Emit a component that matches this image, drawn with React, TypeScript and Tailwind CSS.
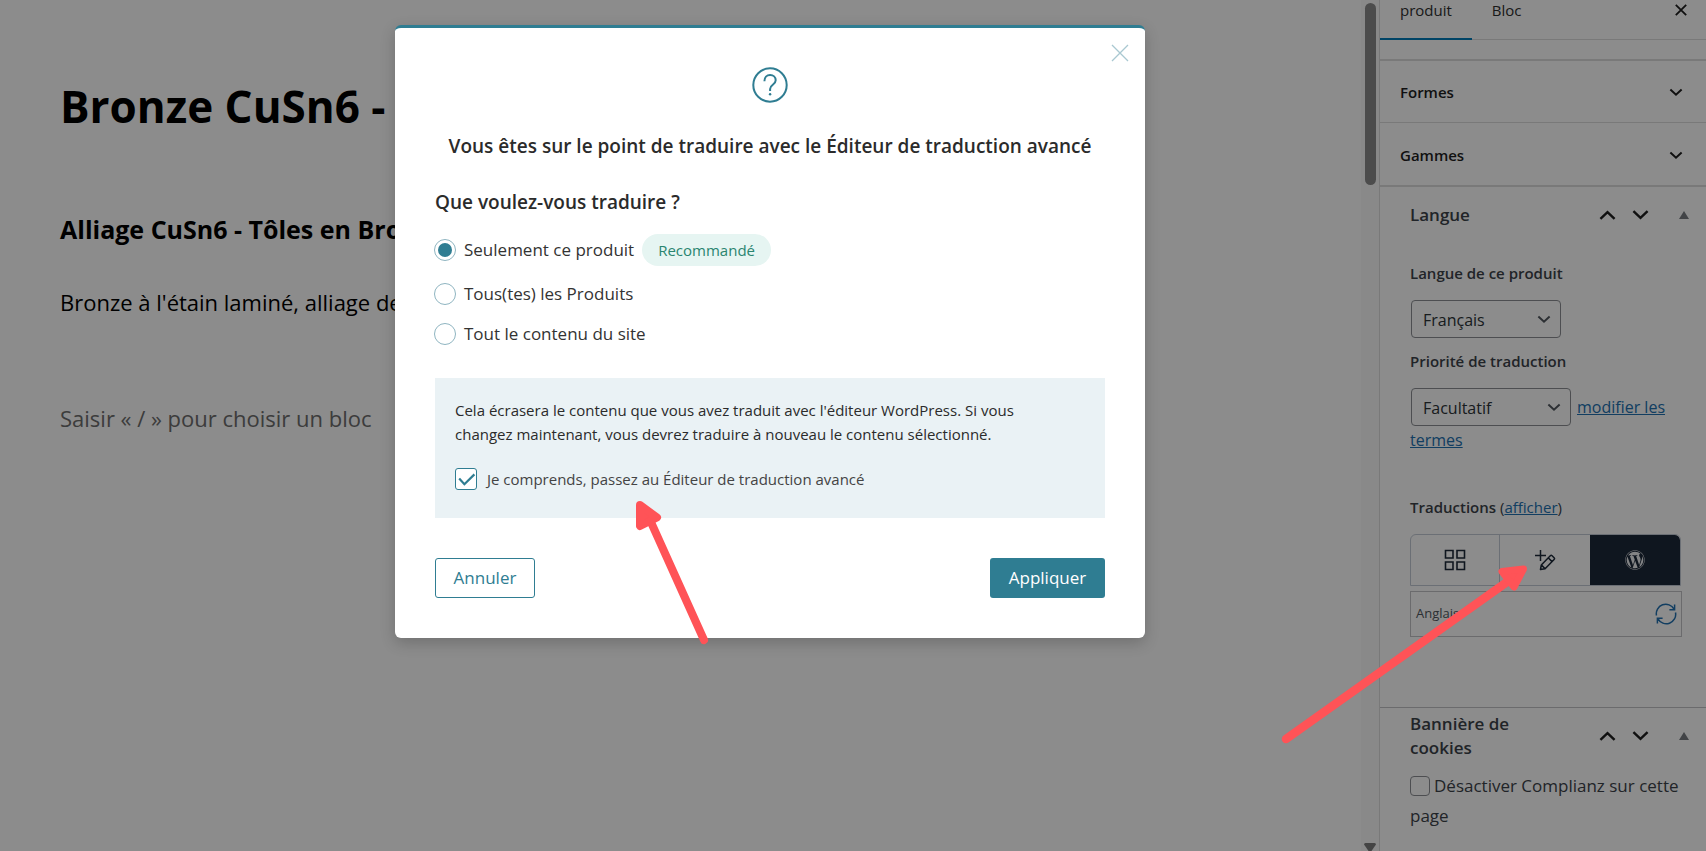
import type { ReactNode } from 'react';
import { FaWordpress } from 'react-icons/fa';

function Chevron({ up = false, className = '' }: { up?: boolean; className?: string }) {
  return (
    <svg viewBox="0 0 18 12" className={className} fill="none" stroke="currentColor" aria-hidden="true">
      <path d={up ? 'M1.5 10 9 3l7.5 7' : 'M1.5 2 9 9l7.5-7'} strokeWidth="2.6" />
    </svg>
  );
}

function PanelRow({ title, last = false }: { title: string; last?: boolean }) {
  return (
    <button
      type="button"
      className={
        last
          ? 'flex h-16 w-full items-center justify-between border-b-2 border-[#dcdcdc] pt-[2px] pr-[23px] pl-5'
          : 'flex h-[62px] w-full items-center justify-between border-b border-[#dcdcdc] pt-[2px] pr-[23px] pl-5'
      }
    >
      <span className="text-[15px] font-semibold text-[#1e1e1e]">{title}</span>
      <Chevron className="h-[9px] w-[14px] text-[#1e1e1e]" />
    </button>
  );
}

function MetaHeader({ title }: { title: string }) {
  return (
    <div className="flex h-[56px] items-center pr-[17px] pl-[30px]">
      <h2 className="w-[130px] text-[17px] leading-6 font-semibold text-[#3c434a]">{title}</h2>
      <div className="ml-auto flex items-center">
        <button type="button" aria-label="Monter" className="mr-4">
          <Chevron up className="h-[12px] w-[17px] text-[#1e1e1e]" />
        </button>
        <button type="button" aria-label="Descendre" className="mr-[30px]">
          <Chevron className="h-[12px] w-[17px] text-[#1e1e1e]" />
        </button>
        <button type="button" aria-label="Replier">
          <svg viewBox="0 0 10 8" className="h-2 w-[10px]" aria-hidden="true">
            <path d="M5 0l5 8H0z" fill="#787c82" />
          </svg>
        </button>
      </div>
    </div>
  );
}

function SelectBox({ id, value, wide = false }: { id: string; value: string; wide?: boolean }) {
  return (
    <div className={wide ? 'relative w-[160px]' : 'relative w-[150px]'}>
      <select
        id={id}
        className="h-[38px] w-full appearance-none rounded-[4px] border border-[#8c8f94] bg-white pt-[2px] pl-[11px] text-[16px] text-[#2c3338]"
      >
        <option>{value}</option>
      </select>
      <Chevron className="pointer-events-none absolute top-[15px] right-[10px] h-[9px] w-[14px] text-[#50575e]" />
    </div>
  );
}

function Sidebar() {
  return (
    <aside className="w-[327px] shrink-0 overflow-hidden border-l border-[#dcdcdc] bg-white">
      <div className="flex h-10 items-stretch border-b border-[#dcdcdc] text-[15px] leading-5 text-[#2f2f2f]">
        <button type="button" className="-mb-px flex items-start border-b-2 border-[#007cba] px-5">
          produit
        </button>
        <button type="button" className="flex items-start px-5">
          Bloc
        </button>
        <button type="button" aria-label="Fermer les réglages" className="mr-[19px] ml-auto flex items-start pt-1">
          <svg viewBox="0 0 12 12" className="h-3 w-3" aria-hidden="true">
            <path d="M.8.8l10.4 10.4M11.2.8.8 11.2" stroke="#1e1e1e" strokeWidth="1.8" />
          </svg>
        </button>
      </div>
      <div className="h-[21px] border-b-2 border-[#dcdcdc]" />
      <PanelRow title="Formes" />
      <PanelRow title="Gammes" last />

      <section className="h-[520px]">
        <MetaHeader title="Langue" />
        <div className="flex flex-col items-start pr-6 pl-[30px] text-[#3c434a]">
          <label htmlFor="lang" className="mt-[18px] text-[15px] leading-6 font-semibold">
            Langue de ce produit
          </label>
          <div className="mt-[15px] pl-px">
            <SelectBox id="lang" value="Français" />
          </div>
          <label htmlFor="prio" className="mt-[11px] text-[15px] leading-6 font-semibold">
            Priorité de traduction
          </label>
          <div className="mt-[15px] flex items-center pl-px">
            <SelectBox id="prio" value="Facultatif" wide />
            <a href="#termes" className="ml-[6px] text-[16px] leading-6 text-[#2271b1] underline">
              modifier les
            </a>
          </div>
          <a href="#termes" className="mt-[2px] text-[16px] leading-6 text-[#2271b1] underline">
            termes
          </a>
          <p className="mt-[43px] text-[15px] leading-6">
            <span className="font-semibold">Traductions</span> (
            <a href="#afficher" className="text-[#2271b1] underline">
              afficher
            </a>
            )
          </p>
          <div className="mt-[15px] flex h-[52px] w-[271px] overflow-hidden rounded-t-[6px] border border-[#c3cbd6]">
            <button type="button" aria-label="Tableau de bord" className="flex w-[89px] items-center justify-center border-r border-[#c3cbd6]">
              <svg viewBox="0 0 22 22" className="h-[22px] w-[22px]" fill="none" stroke="#1d2939" strokeWidth="1.6" aria-hidden="true">
                <path d="M1.500 1.500h7.500v7.500h-7.500zM13 1.500h7.500v7.500H13zM1.500 13h7.500v7.500h-7.500zM13 13h7.500v7.500H13z" />
              </svg>
            </button>
            <button type="button" aria-label="Éditeur de traduction avancé" className="flex w-[90px] items-center justify-center">
              <svg viewBox="0 0 22 22" className="h-[22px] w-[22px]" fill="none" stroke="#1d2939" strokeWidth="1.5" strokeLinejoin="round" aria-hidden="true">
                <path d="M6.500 1v11M1 6.500h11" />
                <path d="M6.500 20.500l.8-4.600 9-9.200a1.300 1.300 0 0 1 1.800 0l2 2a1.300 1.300 0 0 1 0 1.800l-9 9.200zM14.200 8.800l3.800 3.800M7.300 15.900l3.800 3.800" />
              </svg>
            </button>
            <button type="button" aria-label="Éditeur WordPress" className="flex w-[90px] items-center justify-center rounded-tr-[5px] bg-[#1d2939] text-[#eef0f3]">
              <FaWordpress className="h-5 w-5" />
            </button>
          </div>
          <div className="mt-[5px] flex h-[46px] w-[272px] items-center justify-between border border-[#c3c4c7] pr-1 pl-[5px] text-[13px] text-[#50575e]">
            <span>Anglais</span>
            <button type="button" aria-label="Actualiser">
              <svg viewBox="0 0 22 22" className="h-[22px] w-[22px]" fill="none" stroke="#2271b1" strokeWidth="1.5" aria-hidden="true">
                <path d="M1.500 12.500A9.400 9.400 0 0 1 19 6.200M19.600 1.500v5.200h-5.200" />
                <path d="M20.500 9.500A9.400 9.400 0 0 1 3 15.800M2.400 20.500v-5.200h5.200" />
              </svg>
            </button>
          </div>
        </div>
      </section>

      <section className="border-t border-[#c3c4c7]">
        <MetaHeader title="Bannière de cookies" />
        <label className="block pr-6 pl-[30px] text-[17px] leading-[30px] text-[#3c434a]">
          <input
            type="checkbox"
            className="mt-3 mr-1 inline-block h-5 w-5 appearance-none rounded-[4px] border border-[#8c8f94] bg-white align-[-4px]"
          />
          Désactiver Complianz sur cette page
        </label>
      </section>
    </aside>
  );
}

function Option({ label, checked = false, children }: { label: string; checked?: boolean; children?: ReactNode }) {
  return (
    <div className="flex items-center">
      <label className="flex items-center text-[17px] leading-6 text-[#333333]">
        <span className="relative mr-2 flex h-[22px] w-[22px] items-center justify-center">
          <input
            type="radio"
            name="scope"
            defaultChecked={checked}
            className="peer h-[22px] w-[22px] appearance-none rounded-full border border-[#8fb5c1] bg-white"
          />
          <span className="pointer-events-none absolute hidden h-[14px] w-[14px] rounded-full bg-[#2f7d92] peer-checked:block" />
        </span>
        {label}
      </label>
      {children}
    </div>
  );
}

function Dialog() {
  return (
    <div
      role="dialog"
      aria-modal="true"
      aria-labelledby="dialog-title"
      className="relative w-[750px] rounded-[6px] border-t-[3px] border-[#2f7d92] bg-white px-10 pt-[39px] pb-10 text-[#2b2b2b] shadow-[0_5px_15px_rgba(0,0,0,0.2)]"
    >
      <button type="button" aria-label="Fermer" className="absolute top-4 right-4">
        <svg viewBox="0 0 18 18" className="h-[18px] w-[18px]" aria-hidden="true">
          <path d="M1 1l16 16M17 1 1 17" stroke="#a9c8d1" strokeWidth="1.3" />
        </svg>
      </button>
      <svg viewBox="0 0 36 36" className="mx-auto h-9 w-9" fill="none" stroke="#2f7d92" aria-hidden="true">
        <circle cx="18" cy="18" r="16.7" strokeWidth="2" />
        <path d="M12.400 14.200c0-3.600 2.400-6.200 5.700-6.200 3.200 0 5.600 2.300 5.600 5.300 0 4.600-5.600 4.400-5.600 8.600V24" strokeWidth="2" />
        <circle cx="18.1" cy="27.2" r="1.2" fill="#2f7d92" stroke="none" />
      </svg>
      <h2 id="dialog-title" className="mt-[27px] text-center text-[19px] leading-8 font-semibold">
        Vous êtes sur le point de traduire avec le Éditeur de traduction avancé
      </h2>
      <h3 className="mt-6 text-[19px] leading-8 font-semibold">Que voulez-vous traduire ?</h3>
      <div className="mt-4 -ml-px flex flex-col">
        <div className="flex h-8 items-start">
          <Option label="Seulement ce produit" checked>
            <span className="ml-2 rounded-full bg-[#e6f5f2] px-4 text-[15px] leading-8 text-[#2a8570]">
              Recommandé
            </span>
          </Option>
        </div>
        <div className="mt-4 flex flex-col gap-4">
          <Option label="Tous(tes) les Produits" />
          <Option label="Tout le contenu du site" />
        </div>
      </div>
      <div className="mt-8 bg-[#eaf2f5] px-5 pt-5 pb-[27px] text-[15px] leading-6">
        <p className="pr-5">
          Cela écrasera le contenu que vous avez traduit avec l'éditeur WordPress. Si vous changez maintenant, vous
          devrez traduire à nouveau le contenu sélectionné.
        </p>
        <label className="mt-[21px] flex items-center text-[#444444]">
          <span className="relative mr-[10px] flex h-[22px] w-[22px] items-center justify-center">
            <input
              type="checkbox"
              defaultChecked
              className="peer h-[22px] w-[22px] appearance-none rounded-[3px] border border-[#2f7d92] bg-white"
            />
            <svg
              viewBox="0 0 22 22"
              className="pointer-events-none absolute hidden h-[22px] w-[22px] peer-checked:block"
              fill="none"
              stroke="#2f7d92"
              strokeWidth="2.2"
              aria-hidden="true"
            >
              <path d="M4.200 10.600l5.200 5.600L19.400 6.400" />
            </svg>
          </span>
          Je comprends, passez au Éditeur de traduction avancé
        </label>
      </div>
      <div className="mt-10 flex justify-between text-[17px]">
        <button type="button" className="h-10 w-[100px] rounded-[3px] border border-[#2f7d92] bg-white text-[#2f7d92]">
          Annuler
        </button>
        <button type="button" className="h-10 w-[115px] rounded-[3px] bg-[#2f7d92] text-white">
          Appliquer
        </button>
      </div>
    </div>
  );
}

export default function App() {
  return (
    <div className="relative flex h-screen overflow-hidden bg-white font-['Open_Sans','Noto_Sans',sans-serif]">
      <main className="min-w-0 flex-1 px-[60px] pt-[76px] text-black">
        <h1 className="text-[44px] leading-[60px] font-bold">Bronze CuSn6 -</h1>
        <h2 className="mt-[73px] text-[25px] leading-10 font-bold">Alliage CuSn6 - Tôles en Bronze</h2>
        <p className="mt-[33px] text-[22px] leading-10">Bronze à l'étain laminé, alliage de</p>
        <p className="mt-[76px] text-[22px] leading-10 text-[#6e6e6e]">Saisir « / » pour choisir un bloc</p>
      </main>
      <div className="flex w-[18px] shrink-0 flex-col items-center justify-between bg-[#fafafa] pt-[3px]">
        <div className="h-[182px] w-[11px] rounded-full bg-[#8b8b8b]" />
        <svg viewBox="0 0 12 8" className="h-2 w-3" aria-hidden="true">
          <path d="M0 1.500Q0 0 1.500 0h9Q12 0 12 1.500L7.500 8h-3z" fill="#7c7c7c" />
        </svg>
      </div>
      <Sidebar />

      <div className="absolute inset-0 flex items-start justify-center bg-black/45 pt-[25px] pr-[166px]">
        <Dialog />
      </div>

      <svg
        viewBox="0 0 1706 851"
        preserveAspectRatio="xMidYMin slice"
        className="pointer-events-none absolute inset-0 h-full w-full"
        fill="#ff5357"
        stroke="#ff5357"
        strokeLinecap="round"
        strokeLinejoin="round"
        aria-hidden="true"
      >
        <path d="M650 520 704 640" strokeWidth="8" />
        <path d="M640 505l17 12.500-17 8.500z" strokeWidth="8" />
        <path d="M1286 739 1507 582" strokeWidth="8.5" />
        <path d="M1502 571.500l21.500-2.500-9.500 18z" strokeWidth="7" />
      </svg>
    </div>
  );
}
